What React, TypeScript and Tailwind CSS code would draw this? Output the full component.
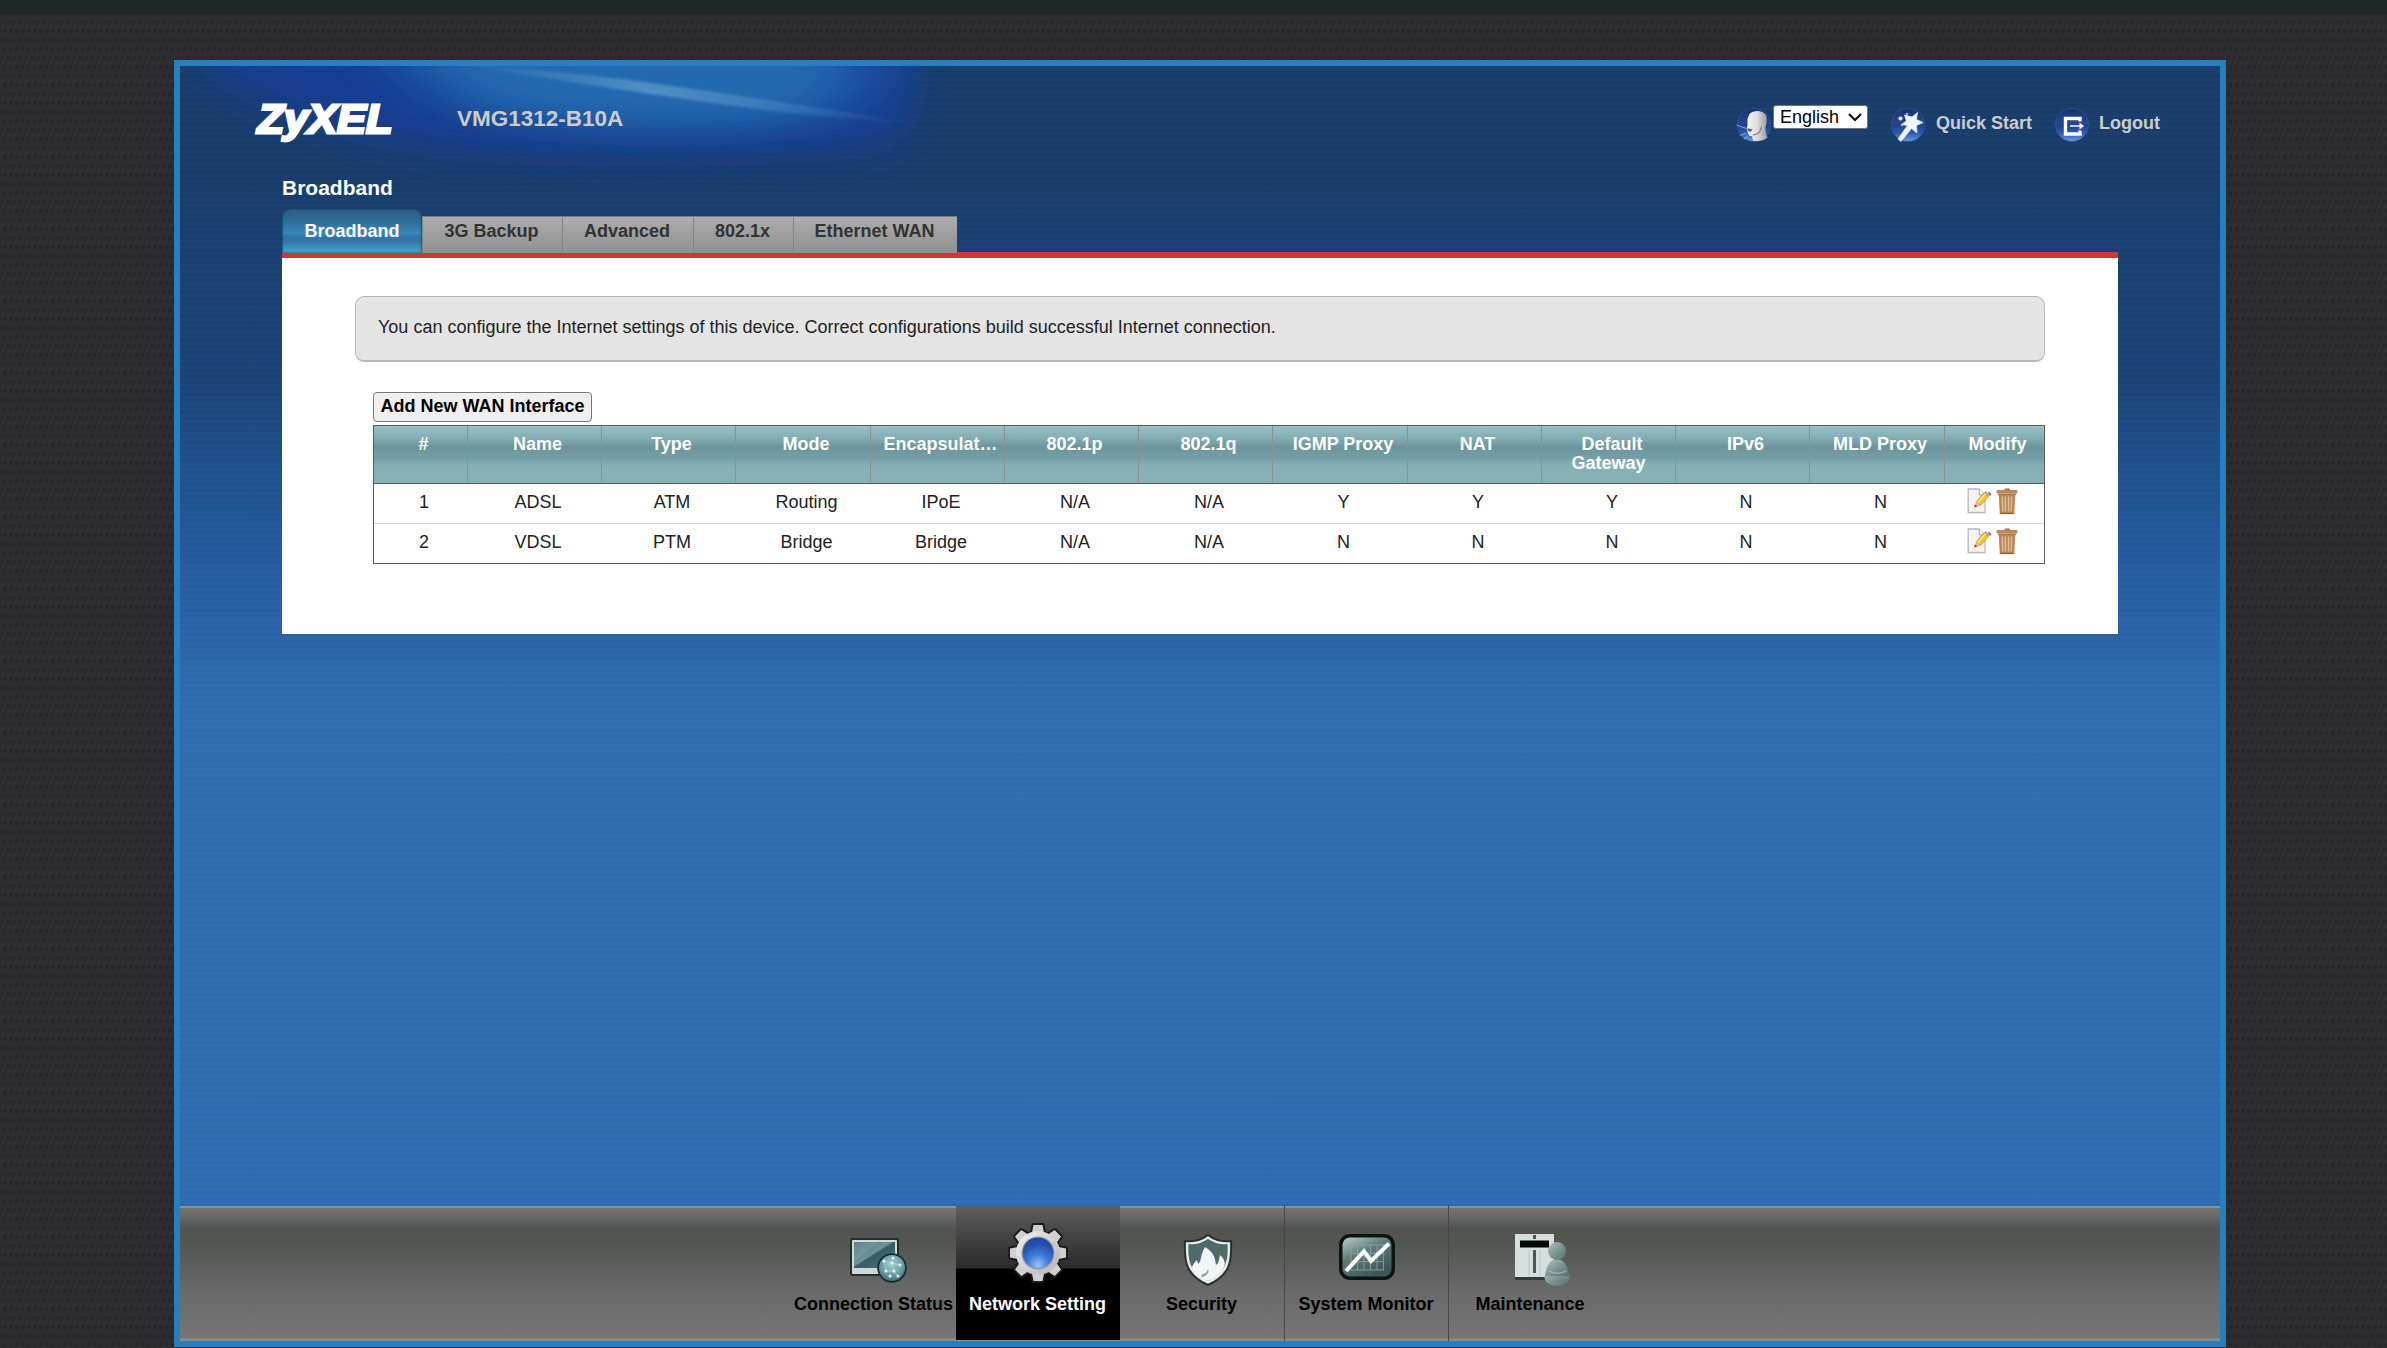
import React from "react";

const tabs = [
  { label: "3G Backup", width: "w-[140px]" },
  { label: "Advanced", width: "w-[131px]" },
  { label: "802.1x", width: "w-[100px]" },
  { label: "Ethernet WAN", width: "w-[164px]" },
];

const columns = [
  "#", "Name", "Type", "Mode", "Encapsulat…", "802.1p", "802.1q",
  "IGMP Proxy", "NAT", "Default Gateway", "IPv6", "MLD Proxy", "Modify",
];

const rows = [
  ["1", "ADSL", "ATM", "Routing", "IPoE", "N/A", "N/A", "Y", "Y", "Y", "N", "N"],
  ["2", "VDSL", "PTM", "Bridge", "Bridge", "N/A", "N/A", "N", "N", "N", "N", "N"],
];

const GRID =
  "grid grid-cols-[94px_134px_134px_135px_134px_134px_134px_135px_134px_134px_134px_135px_99px]";

function HeaderGlow() {
  return (
    <svg className="absolute left-2 top-0" width="820" height="130" viewBox="188 66 820 130">
      <defs>
        <filter id="soft" x="-30%" y="-80%" width="160%" height="260%">
          <feGaussianBlur stdDeviation="17" />
        </filter>
        <filter id="softer" x="-40%" y="-80%" width="180%" height="260%">
          <feGaussianBlur stdDeviation="38 17" />
        </filter>
        <filter id="thin" x="-10%" y="-50%" width="120%" height="200%">
          <feGaussianBlur stdDeviation="1.8" />
        </filter>
        <linearGradient id="streak" x1="0" x2="1">
          <stop offset="0" stopColor="#6aa0d0" stopOpacity="0" />
          <stop offset="0.4" stopColor="#7fb0d8" stopOpacity="0.5" />
          <stop offset="0.65" stopColor="#6aa8d8" stopOpacity="0.35" />
          <stop offset="1" stopColor="#4a90d0" stopOpacity="0" />
        </linearGradient>
      </defs>
      <path
        d="M190 10 H915 C922 90 915 130 880 146 C700 160 560 158 440 148 C330 132 240 100 190 50 Z"
        fill="#153c92"
        filter="url(#soft)"
      />
      <path
        d="M430 10 H850 C870 60 860 105 810 118 C720 136 560 128 490 114 C440 96 400 60 380 10 Z"
        fill="#226bb0"
        filter="url(#softer)"
      />
      <path
        d="M470 66 C620 74 760 102 910 122 C760 114 600 84 470 66 Z"
        fill="url(#streak)"
        stroke="url(#streak)"
        strokeWidth="1.5"
        filter="url(#thin)"
      />
    </svg>
  );
}

function Orb({ id, children }: { id: string; children: React.ReactNode }) {
  return (
    <svg width="36" height="36" viewBox="0 0 36 36">
      <defs>
        <linearGradient id={id} x1="0" y1="0" x2="0" y2="1">
          <stop offset="0" stopColor="#16306f" />
          <stop offset="0.46" stopColor="#2a4690" />
          <stop offset="0.5" stopColor="#1c4088" />
          <stop offset="0.75" stopColor="#2f5bb0" />
          <stop offset="1" stopColor="#6a9ce0" />
        </linearGradient>
      </defs>
      <circle cx="18" cy="18" r="16.6" fill={`url(#${id})`} stroke="#26589a" strokeWidth="0.8" />
      {children}
    </svg>
  );
}

function FaceIcon() {
  return (
    <Orb id="orbFace">
      <defs>
        <linearGradient id="face" x1="0" x2="1">
          <stop offset="0" stopColor="#f6f6f6" />
          <stop offset="0.5" stopColor="#dcdcdc" />
          <stop offset="1" stopColor="#9c9c9c" />
        </linearGradient>
      </defs>
      <path
        d="M13.500 7 C17 3 26 2.500 29.500 7.500 C31.500 11 31 16 29.500 20 C29 24 30 28 31.500 30.500 C27 34.500 21 34.500 17 33.500 L16 29 C14 29.500 12.500 28.500 12 26.500 L10.800 21.500 L11.500 18 L11.500 12 Z"
        fill="url(#face)"
      />
      <path d="M11.500 21 L16.500 22.500 L14.500 25 L12 24 Z" fill="#5b5f6a" />
      <path d="M17 28 C22 27.500 25 24.500 25.500 19.500" stroke="#8f8f8f" strokeWidth="1.600" fill="none" />
      <path d="M0.500 18 L10.500 21.500 M4 28.500 L10.500 26 M8 32 L12 29" stroke="#6fb4ea" strokeWidth="1" />
    </Orb>
  );
}

function WandIcon() {
  return (
    <Orb id="orbWand">
      <path
        d="M22 10 L27.500 5.500 L26.500 12.500 L33 15.500 L26.500 18.500 L27 26 L21.500 21.500 L11 34.500 L8 32 L17.500 18.500 L11.500 17.500 L16.500 14 L14.500 8 Z"
        fill="#f2f4fa"
        stroke="#dfe6f5"
        strokeWidth="0.800"
        strokeLinejoin="round"
      />
      <circle cx="10.500" cy="11.500" r="2.100" fill="#dfe6f5" />
      <circle cx="17" cy="7" r="1.200" fill="#9fb4dc" />
      <circle cx="12" cy="18" r="1.200" fill="#b9c8e8" />
    </Orb>
  );
}

function LogoutIcon() {
  return (
    <Orb id="orbOut">
      <path d="M26 14.500 V11.500 H11.500 V27 H26 V23.500" fill="none" stroke="#fff" strokeWidth="3.400" />
      <path d="M16 19 H27" stroke="#fff" strokeWidth="1.500" />
      <path d="M25.500 15.500 L30 19 L25.500 22.500 Z" fill="#fff" />
    </Orb>
  );
}

function EditIcon() {
  return (
    <svg width="25" height="26" viewBox="0 0 25 26">
      <path d="M1.200 1 H12 L18 7 V24.500 H1.200 Z" fill="#f4f4f4" stroke="#b9b9b9" strokeWidth="1.300" />
      <path d="M12 1 L12.500 7 L18 7" fill="#fff" stroke="#9a9a9a" strokeWidth="0.900" />
      <path d="M9.500 13.500 L17 4.500 L21.500 8.500 L13.500 17.500 Z" fill="#f2c230" stroke="#c88a10" strokeWidth="0.700" />
      <path d="M11 14.500 L18.300 6" stroke="#fbe68a" strokeWidth="1.500" />
      <path d="M7 19.500 L9.300 13.300 L13.600 17.400 Z" fill="#e8b48a" />
      <path d="M7 19.500 L8 16.500 L10.300 18.500 Z" fill="#c03028" />
      <path d="M17 4.500 L18.500 3 L23 7 L21.500 8.500 Z" fill="#a4a8ac" />
      <path d="M21 4.500 C22.500 3.500 25 5.500 24 7.800 L22.800 7.200 Z" fill="#d8443c" />
    </svg>
  );
}

function TrashIcon() {
  return (
    <svg width="22" height="27" viewBox="0 0 22 27">
      <rect x="8.500" y="0.500" width="5.500" height="3" rx="1" fill="#a9713e" />
      <rect x="0.500" y="2" width="21" height="3.600" rx="1" fill="#bd8758" />
      <rect x="2" y="5.600" width="18" height="1.600" fill="#b07a4a" />
      <path d="M2.800 7 H19.200 L18.200 26 H3.800 Z" fill="#bb8453" />
      <path d="M6.300 8.500 L6.800 23.500 M9.400 8.500 V23.500 M12.600 8.500 V23.500 M15.700 8.500 L15.200 23.500" stroke="#dcc096" strokeWidth="1.500" />
      <path d="M3.800 25.500 H18.200" stroke="#94602f" strokeWidth="1.200" />
    </svg>
  );
}

function ConnectionIcon() {
  return (
    <svg className="ml-[10px] mt-[2px]" width="66" height="60" viewBox="0 0 66 60">
      <defs>
        <linearGradient id="scr" x1="0" y1="0" x2="1" y2="1">
          <stop offset="0" stopColor="#4c6c72" />
          <stop offset="0.45" stopColor="#6e959c" />
          <stop offset="0.5" stopColor="#3a5c64" />
          <stop offset="1" stopColor="#4d767e" />
        </linearGradient>
        <radialGradient id="globe" cx="0.5" cy="0.35" r="0.65">
          <stop offset="0" stopColor="#a8cdd2" />
          <stop offset="0.7" stopColor="#6698a1" />
          <stop offset="1" stopColor="#3f6e78" />
        </radialGradient>
      </defs>
      <rect x="4" y="11" width="49" height="38" rx="2" fill="#262d2d" />
      <rect x="6" y="13" width="45" height="34" rx="1" fill="#cfdad8" />
      <rect x="8" y="15" width="41" height="26" fill="url(#scr)" />
      <path d="M8 15 H32 L8 35 Z" fill="#8fb0b4" opacity="0.35" />
      <circle cx="46" cy="41" r="14.800" fill="#1f2c2e" />
      <circle cx="46" cy="41" r="13" fill="url(#globe)" />
      <path d="M38 34 L46 36 L54 38 M46 36 L48 44 L40 44 M48 44 L52 49 M38 34 L40 44" stroke="#b7d8dc" strokeWidth="0.700" fill="none" />
      {[[38, 34], [46, 36], [54, 38], [48, 44], [40, 44], [52, 49], [44, 49], [47, 31]].map(([x, y]) => (
        <circle key={`${x}-${y}`} cx={x} cy={y} r="1.500" fill="#e4f2f3" />
      ))}
    </svg>
  );
}

function GearIcon() {
  return (
    <svg className="mb-[6px]" width="66" height="66" viewBox="-33 -33 66 66">
      <defs>
        <linearGradient id="gear" x1="0" y1="0" x2="1" y2="1">
          <stop offset="0" stopColor="#f0f0f0" />
          <stop offset="1" stopColor="#b4b4b4" />
        </linearGradient>
        <radialGradient id="lens" cx="0.5" cy="0.9" r="0.9">
          <stop offset="0" stopColor="#94c6fb" />
          <stop offset="0.4" stopColor="#3f78d8" />
          <stop offset="1" stopColor="#1a3a94" />
        </radialGradient>
      </defs>
      <g fill="#1c1c1c" stroke="#1c1c1c" strokeWidth="4" strokeLinejoin="round">
        <circle r="21" />
        {[0, 45, 90, 135, 180, 225, 270, 315].map((a) => (
          <path key={a} d="M-6.500 -18 L-4.500 -28 H4.500 L6.500 -18 Z" transform={`rotate(${a})`} />
        ))}
      </g>
      <g fill="#cfcfcf">
        {[0, 45, 90, 135, 180, 225, 270, 315].map((a) => (
          <path key={a} d="M-6.500 -18 L-4.500 -28 H4.500 L6.500 -18 Z" transform={`rotate(${a})`} />
        ))}
        <circle r="22" fill="url(#gear)" />
      </g>
      <circle r="16.500" fill="#8f949c" />
      <circle r="15.300" fill="url(#lens)" />
      <path d="M-14 2 C-8 -6 8 -10 14 -4 C13 -12 6 -15 0 -15 C-8 -15 -14 -8 -14 2 Z" fill="#2450b4" opacity="0.500" />
    </svg>
  );
}

function ShieldIcon() {
  return (
    <svg className="ml-[11px] mt-[8px]" width="56" height="58" viewBox="0 0 56 58">
      <path
        d="M28 4 C35 9.500 43 11 51 10 C52 31 50 44 28 54 C6 44 4 31 5 10 C13 11 21 9.500 28 4 Z"
        fill="#e6ecec"
        stroke="#2b2f2f"
        strokeWidth="2"
      />
      <path
        d="M28 8 C35 12.500 41 14 47.500 13 C48.500 31 45 42 28 50 C11 42 7.500 31 8.500 13 C15 14 21 12.500 28 8 Z"
        fill="#4c6b6a"
      />
      <path
        d="M25 16 C35 22 35 28 36 34 C39 32 39 28 40 24 C44 28 46 31 44 36 C41 43 35 47 28 50 C20 47 13 42 12 36 C13 33 15 31 17 29 L18 33 C22 30 20 24 25 16 Z"
        fill="#f1f5f5"
      />
      <path d="M21 44 C26 42 27 41 28 38 C30 42 26 45 22 46.500 Z" fill="#93a8a7" />
    </svg>
  );
}

function MonitorIcon() {
  return (
    <svg className="mt-[3px]" width="60" height="50" viewBox="0 0 60 50">
      <defs>
        <linearGradient id="mon" x1="0" y1="0" x2="0.600" y2="1">
          <stop offset="0" stopColor="#b9cdcb" />
          <stop offset="0.45" stopColor="#607c7a" />
          <stop offset="1" stopColor="#3c5856" />
        </linearGradient>
      </defs>
      <rect x="2" y="2" width="56" height="46" rx="11" fill="#0e1414" />
      <rect x="5.500" y="5.500" width="49" height="39" rx="7.500" fill="url(#mon)" />
      <g stroke="#90a9a7" strokeWidth="0.900" opacity="0.850">
        <path d="M14 13 V38 M20.500 13 V38 M27 13 V38 M33.500 13 V38 M40 13 V38 M46.500 13 V38" />
        <path d="M14 13 H47 M14 21.300 H47 M14 29.600 H47 M14 38 H47" />
      </g>
      <path d="M9 39 L27 19.500 L34 29 L52 11.500" fill="none" stroke="#fff" strokeWidth="4" />
    </svg>
  );
}

function MaintenanceIcon() {
  return (
    <svg className="ml-[22px] mt-[8px]" width="58" height="56" viewBox="0 0 58 56">
      <defs>
        <linearGradient id="man" x1="0" y1="0" x2="1" y2="1">
          <stop offset="0" stopColor="#b4c6c4" />
          <stop offset="0.5" stopColor="#7d9694" />
          <stop offset="1" stopColor="#58716f" />
        </linearGradient>
      </defs>
      <rect x="2" y="2" width="39" height="44" fill="#d5dfde" />
      <rect x="2" y="45" width="32" height="3" fill="#2f3d3c" />
      <rect x="7" y="8.500" width="29" height="7" fill="#060808" />
      <path d="M21.500 3 V7 M21.500 18 V41" stroke="#475a59" strokeWidth="3" />
      <path d="M16 18 V45 M27 18 V45" stroke="#b9c7c6" strokeWidth="1" />
      <ellipse cx="44" cy="45.500" rx="12.500" ry="8.500" fill="url(#man)" />
      <path d="M32 44 C33 34 37 27 44 27 C51 27 55 34 56 44 Z" fill="url(#man)" />
      <circle cx="44" cy="19" r="9" fill="url(#man)" />
      <path d="M36 39 C41 42 47 42 53 39" stroke="#c4d3d2" strokeWidth="1.300" fill="none" opacity="0.600" />
    </svg>
  );
}

const navItems = [
  { label: "Connection Status", icon: <ConnectionIcon /> },
  { label: "Network Setting", icon: <GearIcon />, active: true },
  { label: "Security", icon: <ShieldIcon /> },
  { label: "System Monitor", icon: <MonitorIcon /> },
  { label: "Maintenance", icon: <MaintenanceIcon /> },
];

export default function App() {
  return (
    <div className="flex h-[1348px] w-[2387px] flex-col overflow-hidden bg-[#2d2d2f] bg-[radial-gradient(circle_at_2px_4px,#262628_1px,transparent_2.2px),radial-gradient(circle_at_5px_13px,#252527_1px,transparent_2.4px),radial-gradient(circle_at_3px_9px,#353537_0.5px,transparent_1.5px)] bg-[length:6px_18px] font-['Liberation_Sans',Arial,sans-serif] text-[18px] leading-[20px]">
      <div className="h-[15px] shrink-0 bg-[#22272a]" />

      <div className="ml-[174px] mt-[45px] flex h-[1287px] w-[2052px] shrink-0 flex-col border-6 border-[#267fbf] bg-[repeating-linear-gradient(to_bottom,rgba(255,255,255,0.018)_0px,rgba(255,255,255,0)_3px,rgba(0,10,60,0.03)_6px),linear-gradient(to_bottom,#1a3d6c_0px,#1a3d6c_110px,#1a4072_184px,#1b4478_314px,#1e508a_394px,#245a9e_484px,#2c66ab_584px,#306eb1_640px,#2f6cb1_1140px)]">
        <header className="relative flex h-[99px] shrink-0 items-start">
          <HeaderGlow />
          <svg className="relative ml-[72px] mt-[28px]" width="150" height="58" viewBox="-2 -6 150 58">
            <text
              x="3.500"
              y="33"
              textLength="135"
              lengthAdjust="spacingAndGlyphs"
              fontFamily="Liberation Sans, Arial, sans-serif"
              fontWeight="bold"
              fontStyle="italic"
              fontSize="40"
              fill="#fff"
              stroke="#fff"
              strokeWidth="2.800"
            >
              ZyXEL
            </text>
          </svg>
          <h1 className="relative ml-[55px] mt-[41px] text-[22.5px] font-bold leading-[24px] text-[#cccccc]">
            VMG1312-B10A
          </h1>
          <div className="ml-auto mr-[60px] mt-[39px] flex items-start font-bold text-[#cccccc]">
            <div className="mt-[2px]">
              <FaceIcon />
            </div>
            <div className="relative ml-px">
              <select className="h-6 w-[95px] appearance-none rounded-[3px] border border-[#767676] bg-white pl-[6px] text-[18px] font-normal leading-[22px] text-black">
                <option>English</option>
              </select>
              <svg className="pointer-events-none absolute right-[6px] top-[7px]" width="14" height="10" viewBox="0 0 14 10">
                <path d="M1 2 L7 8 L13 2" fill="none" stroke="#111" strokeWidth="2.200" />
              </svg>
            </div>
            <div className="ml-[22px] mt-[2px]">
              <WandIcon />
            </div>
            <span className="ml-[10px] mt-[8px]">Quick Start</span>
            <div className="ml-[22px] mt-[2px]">
              <LogoutIcon />
            </div>
            <span className="ml-[9px] mt-[8px]">Logout</span>
          </div>
        </header>

        <main className="mx-[102px] flex flex-col">
          <h2 className="mt-[11px] h-[33px] text-[21px] font-bold leading-[24px] text-white">Broadband</h2>
          <nav className="relative flex h-[49px] items-end font-bold">
            <div className="absolute inset-x-0 bottom-0 h-[6px] bg-[#cc3838]" />
            <div className="relative mb-[5px] flex items-end">
              <div className="h-[44px] w-[140px] rounded-t-[8px] bg-[linear-gradient(to_bottom,#285f86_0px,#2d6a96_10px,#3478aa_18px,#3a86b8_24px,#3272a8_28px,#3478ac_33px,#3fa0c4_41px,#3fa4c8_44px)] pt-[12px] text-center text-white shadow-[inset_1px_0_2px_rgba(10,50,90,0.5),inset_-1px_0_2px_rgba(10,50,90,0.5)]">
                Broadband
              </div>
              {tabs.map((t) => (
                <div
                  key={t.label}
                  className={`${t.width} h-[37px] border-l border-t border-l-[#858585] border-t-[#75808c] bg-[linear-gradient(to_bottom,#adadad,#8f8f8f)] pr-[2px] pt-[4px] text-center text-[#333333]`}
                >
                  {t.label}
                </div>
              ))}
            </div>
          </nav>

          <section className="h-[376px] bg-white px-[73px] pt-[38px] text-[#222222]">
            <div className="h-[66px] w-[1690px] rounded-[9px] border border-b-2 border-[#b8b8b8] bg-[#e4e4e4] pl-[22px] pt-[20px]">
              You can configure the Internet settings of this device. Correct configurations build successful Internet
              connection.
            </div>

            <div className="ml-[18px] mt-[30px] w-[1672px]">
              <button className="block h-[30px] w-[219px] rounded-[4px] border border-[#767676] bg-[#efefef] pb-[2px] font-bold leading-[20px] text-black">
                Add New WAN Interface
              </button>
              <div className="mt-[3px] h-[139px] border border-[#5c5f61]">
                <div
                  className={`${GRID} h-[58px] border-b border-[#5c5f61] bg-[linear-gradient(to_bottom,#98c1c6_0px,#84adb3_12px,#6b949c_21px,#759fa6_32px,#86b0b6_40px,#86b0b6_57px)] text-center font-bold leading-[19px] text-white`}
                >
                  {columns.map((c, i) => (
                    <div
                      key={c}
                      className={
                        i === columns.length - 1
                          ? "pl-[6px] pt-[9px]"
                          : c === "Default Gateway"
                            ? "border-r border-[#8f8f8f] pt-[9px]"
                            : "border-r border-[#8f8f8f] pl-[6px] pt-[9px]"
                      }
                    >
                      {c === "Default Gateway" ? (
                        <>
                          <span className="pl-[7px]">Default</span>
                          <br />
                          Gateway
                        </>
                      ) : (
                        c
                      )}
                    </div>
                  ))}
                </div>
                {rows.map((r, ri) => (
                  <div
                    key={r[0]}
                    className={
                      ri === 0
                        ? `${GRID} h-10 border-b border-[#d5d5d5] text-center`
                        : `${GRID} h-10 text-center`
                    }
                  >
                    {r.map((v, i) => (
                      <div key={i} className="pl-[6px] pt-[8px]">
                        {v}
                      </div>
                    ))}
                    <div className="flex items-start gap-[4px] pl-[22px] pt-[4px]">
                      <EditIcon />
                      <TrashIcon />
                    </div>
                  </div>
                ))}
              </div>
            </div>
          </section>
        </main>

        <footer className="mt-auto flex h-[135px] bg-[linear-gradient(to_bottom,#93948f_0px,#8a8b86_2px,#747474_2px,#636363_14px,#525353_22px,#535650_38px,#5c5e5d_58px,#6b6b6b_90px,#757575_132px,#8c8c8a_133px,#8c8c8a_135px)] pl-[612px] font-bold">
          {navItems.map((n, i) => (
            <div
              key={n.label}
              className={`flex w-[164px] flex-col items-center ${
                n.active
                  ? "bg-[linear-gradient(to_bottom,#5e5e5e_0px,#444444_30px,#2b2b2b_62px,#000000_63px,#000000_134px,#8c8c8a_134px)] text-white"
                  : i > 2
                    ? "border-l border-[#474747] text-black"
                    : "text-black"
              }`}
            >
              <div className="mt-[14px] flex h-[71px] items-center justify-center">{n.icon}</div>
              <span className="mt-[3px] whitespace-nowrap pr-px">{n.label}</span>
            </div>
          ))}
        </footer>
      </div>
    </div>
  );
}
